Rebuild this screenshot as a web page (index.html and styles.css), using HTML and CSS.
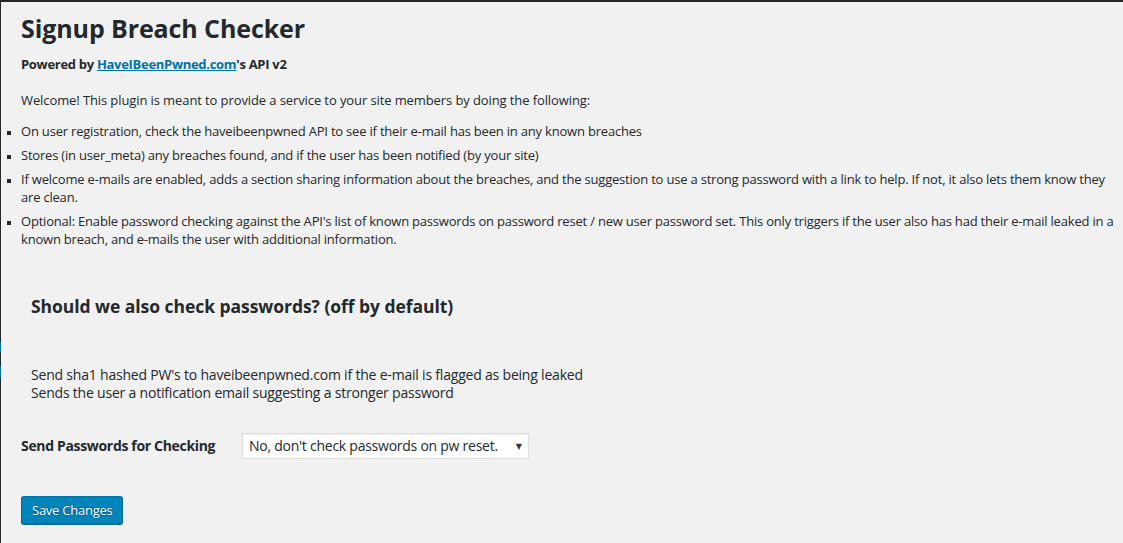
FILE: index.html
```html
<!DOCTYPE html>
<html lang="en">
<head>
<meta charset="utf-8">
<title>Signup Breach Checker</title>
<link rel="stylesheet" href="styles.css">
</head>
<body>
<div class="frame">
  <span class="edge-mark edge-mark-a"></span>
  <span class="edge-mark edge-mark-b"></span>
  <div class="wrap">
    <h1 class="page-title">Signup Breach Checker</h1>
    <p class="powered"><strong>Powered by <a href="#">HaveIBeenPwned.com</a>'s API v2</strong></p>
    <p class="intro">Welcome! This plugin is meant to provide a service to your site members by doing the following:</p>
    <ul class="features">
      <li>On user registration, check the haveibeenpwned API to see if their e-mail has been in any known breaches</li>
      <li>Stores (in user_meta) any breaches found, and if the user has been notified (by your site)</li>
      <li>If welcome e-mails are enabled, adds a section sharing information about the breaches, and the suggestion to use a strong password with a link to help. If not, it also lets them know they are clean.</li>
      <li>Optional: Enable password checking against the API's list of known passwords on password reset / new user password set. This only triggers if the user also has had their e-mail leaked in a known breach, and e-mails the user with additional information.</li>
    </ul>
    <form class="settings">
      <div class="section">
        <h2 class="section-title">Should we also check passwords? (off by default)</h2>
        <p class="section-desc">Send sha1 hashed PW's to haveibeenpwned.com if the e-mail is flagged as being leaked<br>Sends the user a notification email suggesting a stronger password</p>
      </div>
      <div class="field-row">
        <label class="field-label" for="pw-check">Send Passwords for Checking</label>
        <div class="select" id="pw-check">
          <span class="select-value">No, don't check passwords on pw reset.</span>
          <span class="select-arrow">&#9660;</span>
        </div>
      </div>
      <div class="submit-row">
        <button type="button" class="button-primary">Save Changes</button>
      </div>
    </form>
  </div>
</div>
</body>
</html>
```

FILE: styles.css
```css
html, body {
  margin: 0;
  padding: 0;
  height: 100%;
}
body {
  background: #f1f1f1;
  color: #23282d;
  font-family: "Open Sans", "DejaVu Sans", sans-serif;
  font-size: 13px;
  line-height: 18px;
}
.frame {
  position: relative;
  min-height: 100%;
  box-sizing: border-box;
  border-top: 2px solid #23282d;
  border-left: 1px solid #23282d;
}
.edge-mark {
  position: absolute;
  left: -1px;
  width: 1px;
  background: #0073aa;
}
.edge-mark-a { top: 340px; height: 10px; }
.edge-mark-b { top: 364px; height: 11px; }
.wrap {
  padding: 12px 3px 0 20px;
}
.page-title {
  margin: 0;
  font-size: 25px;
  line-height: 28px;
  font-weight: 700;
  letter-spacing: -0.1px;
}
.powered {
  margin: 13px 0 0 0;
  letter-spacing: -0.3px;
}
.powered a {
  color: #0073aa;
  text-decoration: underline;
}
.intro {
  margin: 18px 0 0 0;
  letter-spacing: -0.1px;
}
.features {
  margin: 13px 0 0 0;
  padding: 0;
  list-style: square outside;
  letter-spacing: -0.2px;
}
.features li {
  margin: 0 0 6px 0;
}
.features li::marker {
  font-size: 10px;
}
.section {
  padding: 0 10px;
}
.section-title {
  margin: 46px 0 0 0;
  font-size: 17.5px;
  line-height: 24px;
  font-weight: 700;
  letter-spacing: -0.05px;
}
.section-desc {
  margin: 48px 0 0 0;
  font-size: 14px;
  line-height: 18px;
  letter-spacing: -0.2px;
}
.field-row {
  display: flex;
  align-items: center;
  margin-top: 31px;
}
.field-label {
  width: 221px;
  font-size: 14px;
  font-weight: 700;
  letter-spacing: -0.33px;
}
.select {
  display: flex;
  align-items: center;
  justify-content: space-between;
  box-sizing: border-box;
  width: 287px;
  height: 26px;
  padding: 0 6px 0 6px;
  background: #fff;
  border: 1px solid #ddd;
  box-shadow: inset 0 1px 2px rgba(0,0,0,0.07);
  font-size: 14px;
}
.select-value {
  letter-spacing: -0.25px;
}
.select-arrow {
  font-size: 8px;
  color: #32373c;
}
.submit-row {
  margin-top: 37px;
}
.button-primary {
  box-sizing: border-box;
  height: 28px;
  padding: 0 10px;
  background: #0085ba;
  border: 1px solid #0073aa;
  border-color: #0073aa #006799 #006799;
  border-radius: 3px;
  box-shadow: 0 1px 0 #006799;
  color: #fff;
  font-family: inherit;
  font-size: 13px;
  line-height: 26px;
  letter-spacing: -0.25px;
  text-shadow: 0 -1px 1px #006799, 1px 0 1px #006799, 0 1px 1px #006799, -1px 0 1px #006799;
  cursor: pointer;
}
```
